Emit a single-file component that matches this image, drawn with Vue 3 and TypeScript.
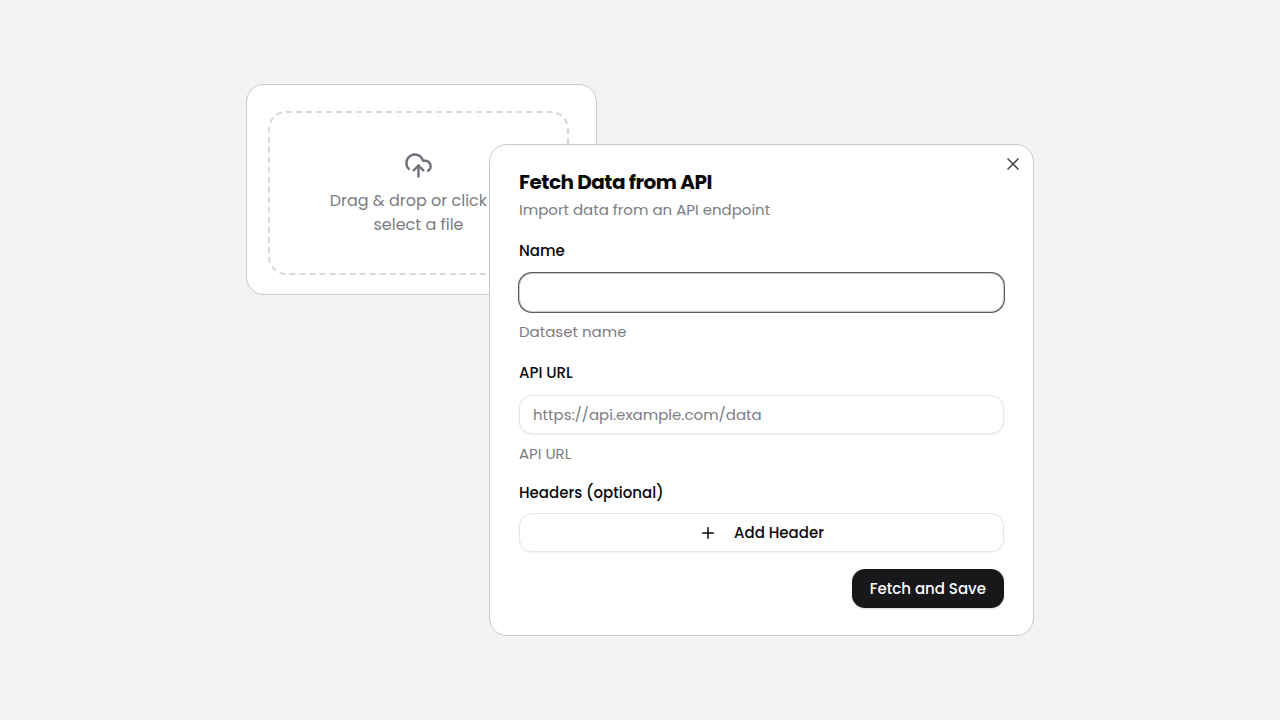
<script setup lang="ts">
import { onMounted, ref } from 'vue'

const name = ref('')
const apiUrl = ref('')
const nameInput = ref<HTMLInputElement | null>(null)

onMounted(() => nameInput.value?.focus())
</script>

<template>
  <main class="page">
    <div class="stack">
      <section class="card upload">
        <button type="button" class="dropzone">
          <svg class="cloud" viewBox="0 0 24 24" aria-hidden="true">
            <path d="M4 14.899A7 7 0 1 1 15.71 8h1.79a4.5 4.5 0 0 1 2.5 8.242" />
            <path d="M12 12v9" />
            <path d="m16 16-4-4-4 4" />
          </svg>
          <span class="hint">Drag &amp; drop or click to<br />select a file</span>
        </button>
      </section>

      <section class="card dialog" role="dialog" aria-labelledby="dialog-title">
        <button type="button" class="close" aria-label="Close">
          <svg viewBox="0 0 24 24" aria-hidden="true">
            <path d="M18 6 6 18" />
            <path d="m6 6 12 12" />
          </svg>
        </button>

        <header class="head">
          <h2 id="dialog-title">Fetch Data from API</h2>
          <p>Import data from an API endpoint</p>
        </header>

        <form class="form" @submit.prevent>
          <div class="field">
            <label for="name">Name</label>
            <input id="name" ref="nameInput" v-model="name" type="text" autocomplete="off" />
            <p>Dataset name</p>
          </div>

          <div class="field">
            <label for="api-url">API URL</label>
            <input id="api-url" v-model="apiUrl" type="text" placeholder="https://api.example.com/data" />
            <p>API URL</p>
          </div>

          <div class="headers">
            <h3>Headers (optional)</h3>
            <button type="button" class="add">
              <svg viewBox="0 0 24 24" aria-hidden="true">
                <path d="M5 12h14" />
                <path d="M12 5v14" />
              </svg>
              Add Header
            </button>
          </div>

          <div class="actions">
            <button type="submit" class="save">Fetch and Save</button>
          </div>
        </form>
      </section>
    </div>
  </main>
</template>

<style>
body {
  margin: 0;
  background: #f3f3f3;
}
</style>

<style scoped>
* {
  box-sizing: border-box;
}

.page {
  display: grid;
  place-items: center;
  min-height: 100vh;
  padding: 24px;
  background: #f3f3f3;
  color: #09090b;
  font-family: Poppins, Inter, "Liberation Sans", sans-serif;
  font-size: 15px;
  line-height: 24px;
}

h2,
h3,
p {
  margin: 0;
}

button,
input {
  font: inherit;
  color: inherit;
}

svg {
  fill: none;
  stroke: currentColor;
  stroke-width: 2;
  stroke-linecap: round;
  stroke-linejoin: round;
}

.stack {
  display: grid;
  width: 100%;
  max-width: 788px;
}

.card {
  grid-area: 1 / 1;
  background: #fff;
  border: 1px solid #c9c9c9;
  border-radius: 18px;
}

.upload {
  place-self: start;
  width: 100%;
  max-width: 351px;
  padding: 26px 27px 19px 21px;
}

.dropzone {
  display: flex;
  flex-direction: column;
  align-items: center;
  width: 100%;
  padding: 38px 16px 36px;
  gap: 9px;
  background: none;
  border: 2px dashed #d9d9db;
  border-radius: 18px;
  color: #71717a;
}

.cloud {
  width: 29px;
  height: 29px;
}

.hint {
  color: #7c7c84;
  font-size: 16px;
  white-space: nowrap;
}

.dialog {
  position: relative;
  margin: 60px 0 0 243px;
  padding: 23px 29px 27px;
}

.close {
  position: absolute;
  top: 9px;
  right: 10px;
  display: grid;
  padding: 0;
  background: none;
  border: 0;
  color: #4f4f52;
}

.close svg {
  width: 20px;
  height: 20px;
}

.head {
  display: grid;
  gap: 2px;
  margin-bottom: 17px;
}

.head h2 {
  font-size: 20px;
  line-height: 28px;
  font-weight: 700;
  letter-spacing: -0.025em;
}

.head p,
.field p {
  color: #7c7c84;
}

.field {
  display: flex;
  flex-direction: column;
  margin-bottom: 17px;
}

.field:nth-child(2) {
  margin-bottom: 15px;
}

.field label,
.headers h3,
.add,
.save {
  font-size: 15px;
  font-weight: 500;
}

.field input {
  width: 100%;
  height: 39px;
  margin: 10px 0 8px;
  padding: 0 13px;
  background: #fff;
  border: 1px solid #e6e6e8;
  border-radius: 13px;
  box-shadow: 0 1px 2px rgb(0 0 0 / 8%);
  outline: none;
}

.field input:focus {
  border-color: #c8c8c8;
  box-shadow: 0 0 0 1px #5c5c5e;
  caret-color: transparent;
}

.field input::placeholder {
  color: #7c7c84;
  opacity: 1;
}

.headers {
  display: grid;
  gap: 8px;
  margin-bottom: 17px;
}

.add {
  display: flex;
  align-items: center;
  justify-content: center;
  gap: 17px;
  height: 39px;
  background: #fff;
  border: 1px solid #e6e6e8;
  border-radius: 13px;
  box-shadow: 0 1px 2px rgb(0 0 0 / 6%);
}

.add svg {
  width: 18px;
  height: 18px;
}

.actions {
  display: flex;
  justify-content: flex-end;
}

.save {
  height: 39px;
  padding: 0 18px;
  background: #18181b;
  border: 0;
  border-radius: 13px;
  box-shadow: 0 1px 2px rgb(0 0 0 / 15%);
  color: #fafafa;
}
</style>
